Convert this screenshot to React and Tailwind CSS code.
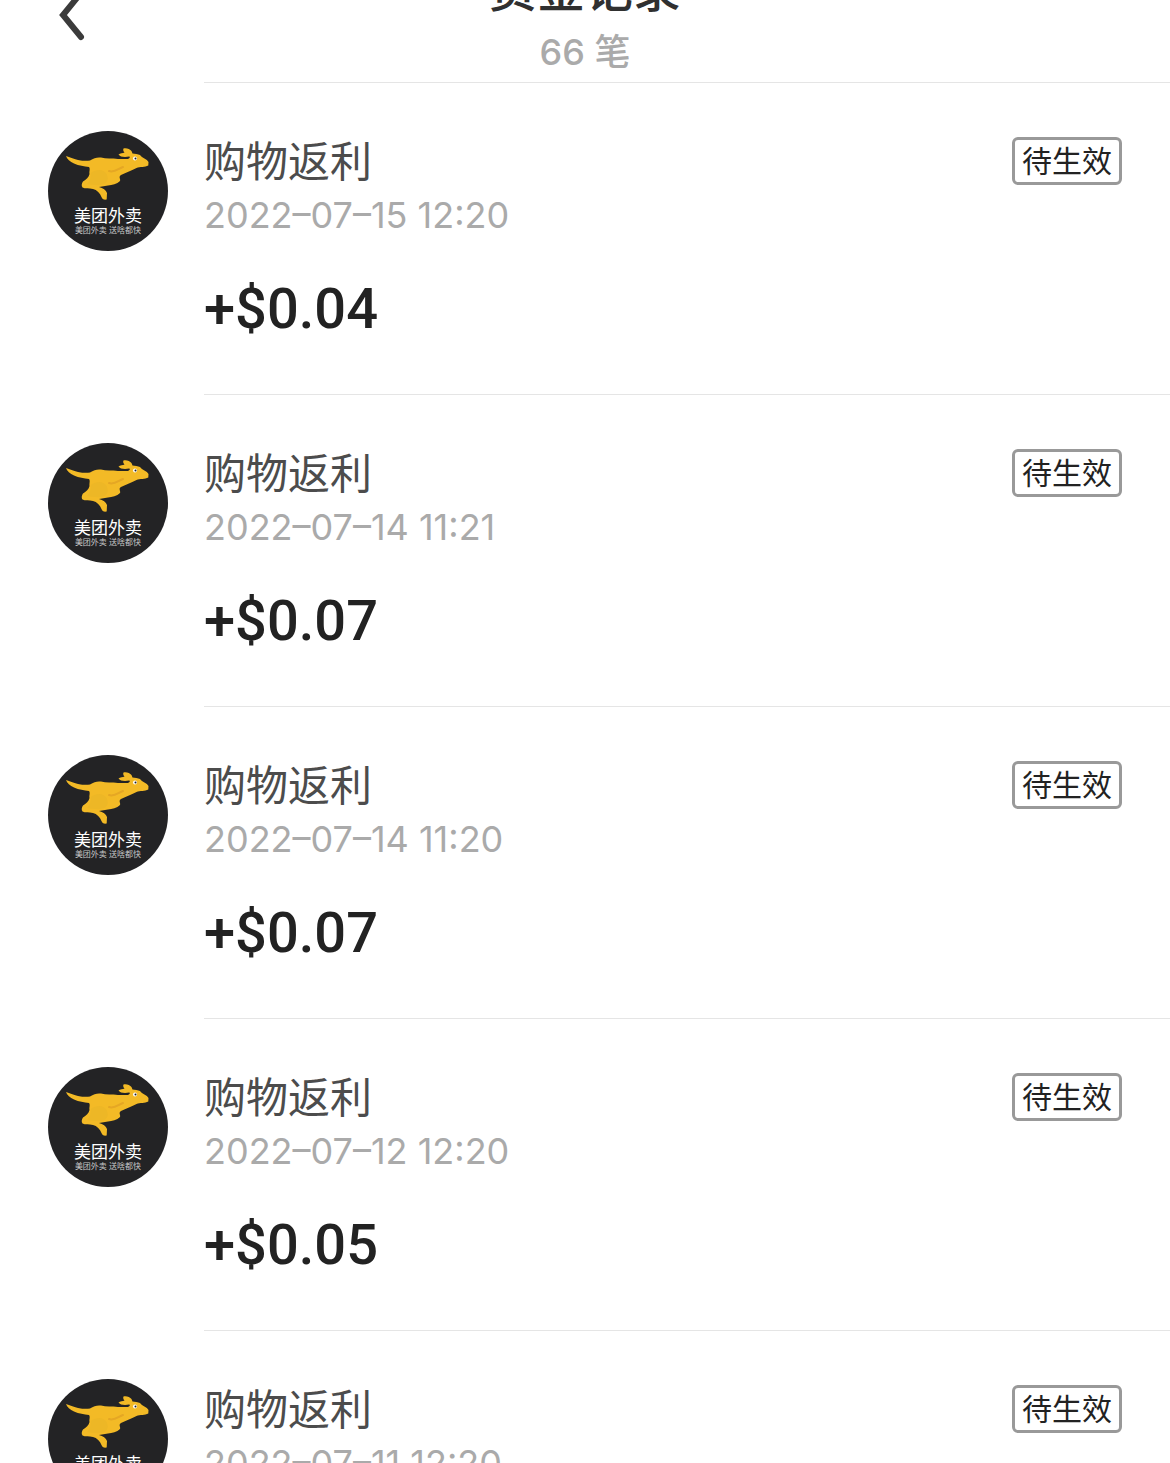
const records = [
  { id: 1, title: "购物返利", time: "2022–07–15 12:20", amount: "+$0.04", status: "待生效" },
  { id: 2, title: "购物返利", time: "2022–07–14 11:21", amount: "+$0.07", status: "待生效" },
  { id: 3, title: "购物返利", time: "2022–07–14 11:20", amount: "+$0.07", status: "待生效" },
  { id: 4, title: "购物返利", time: "2022–07–12 12:20", amount: "+$0.05", status: "待生效" },
  { id: 5, title: "购物返利", time: "2022–07–11 12:20", amount: "+$0.05", status: "待生效" },
];

function Kangaroo() {
  return (
    <svg viewBox="16 15 88 56" className="h-[56px] w-[88px]" aria-hidden="true">
      <path
        fill="#f3ba26"
        d="M18 25C22 26 25 28 30 29C35 30 39 30 42 29.500C46 27 49 26 53 26.500C58 28 64 27 70 28L80 28C82 27 82.500 25.500 81 25.500C77 26.500 72 26 70.500 23.500C72 22 75 22.500 76.500 21.500C75 20 75 18.500 75.500 17.500C78 16.500 82 18 83.500 20L84.500 22.500C87 23 90 23 92 24C94 27 99 28 100.500 31L100.300 34.500C97 36.500 92 35.500 88.500 37C84 39 78 42 73 44C70 46 73 48 72 50C69 53 64 54 60 54.500L51 56C55 57 58 59 59 62L58.700 68.500C56 69 54 68 53.500 66C52 62 49 59 45 58C41 57 37 58 34.500 56.500C33 54.500 34 52 35 50.500C38 48.500 41 46 41.500 43C41 40 42.500 38 41 36C36 35 31 35 26 32.500C22 30.500 19 28 18 25Z"
      />
      <path fill="#edb726" d="M43 42C46 39 54 37 58 42C61 47 60 51 56 53C51 55 45 54 39 53C42 50 43 46 43 42Z" />
      <path fill="none" stroke="#e5a724" strokeWidth="2" strokeLinecap="round" d="M61 40C66 42 70 38 75 36" />
      <circle cx="87" cy="27.500" r="2" fill="#fff" />
      <circle cx="87.500" cy="27.500" r="1" fill="#222" />
    </svg>
  );
}

function Avatar() {
  return (
    <div className="flex size-[120px] shrink-0 flex-col items-center overflow-hidden rounded-full bg-[#232325] pt-[15px] whitespace-nowrap text-white">
      <Kangaroo />
      <span className="mt-1 text-[17px] leading-[20px]">美团外卖</span>
      <span className="text-[8px] leading-[8px] text-[#c8c8c8]">美团外卖 送啥都快</span>
    </div>
  );
}

function RecordRow({ record }) {
  return (
    <li className="flex gap-9 pl-12">
      <div className="pt-[49px]">
        <Avatar />
      </div>
      <div className="flex h-[312px] flex-1 items-start justify-between border-t border-[#e5e5e5] pt-12 pr-12">
        <div>
          <h2 className="text-[42px] leading-[62px] text-[#4c4c4c]">{record.title}</h2>
          <p className="text-[36px] leading-[44px] text-[#aaaaaa]">{record.time}</p>
          <p className="mt-9 font-[Roboto,sans-serif] text-[56px] leading-[72px] font-medium text-[#222222]">{record.amount}</p>
        </div>
        <span className="mt-1.5 flex h-12 items-center rounded-[6px] border-3 border-[#999999] px-[7px] text-[30px] text-[#222222]">
          {record.status}
        </span>
      </div>
    </li>
  );
}

export default function App() {
  return (
    <main className="h-screen overflow-hidden bg-white font-[Inter,'Noto_Sans_CJK_SC',sans-serif]">
      {/* header is scrolled partly out of view, so its content hangs from the bottom edge */}
      <header className="grid h-[82px] grid-cols-[1fr_auto_1fr] content-end items-end overflow-hidden">
        <button type="button" aria-label="返回" className="ml-[56px] justify-self-start pb-10">
          <svg viewBox="0 0 32 54" className="h-[54px] w-8" fill="none" stroke="#3b3b3b" strokeWidth="6" strokeLinecap="round" strokeLinejoin="miter">
            <path d="M25 5L7 27L25 49" />
          </svg>
        </button>
        <div className="text-center">
          <h1 className="text-[48px] leading-[76px] font-medium text-[#303030]">资金记录</h1>
          <p className="pb-1.5 text-[36px] leading-[48px] font-medium text-[#aaaaaa]">66 笔</p>
        </div>
      </header>
      <ul>
        {records.map((record) => (
          <RecordRow key={record.id} record={record} />
        ))}
      </ul>
    </main>
  );
}
